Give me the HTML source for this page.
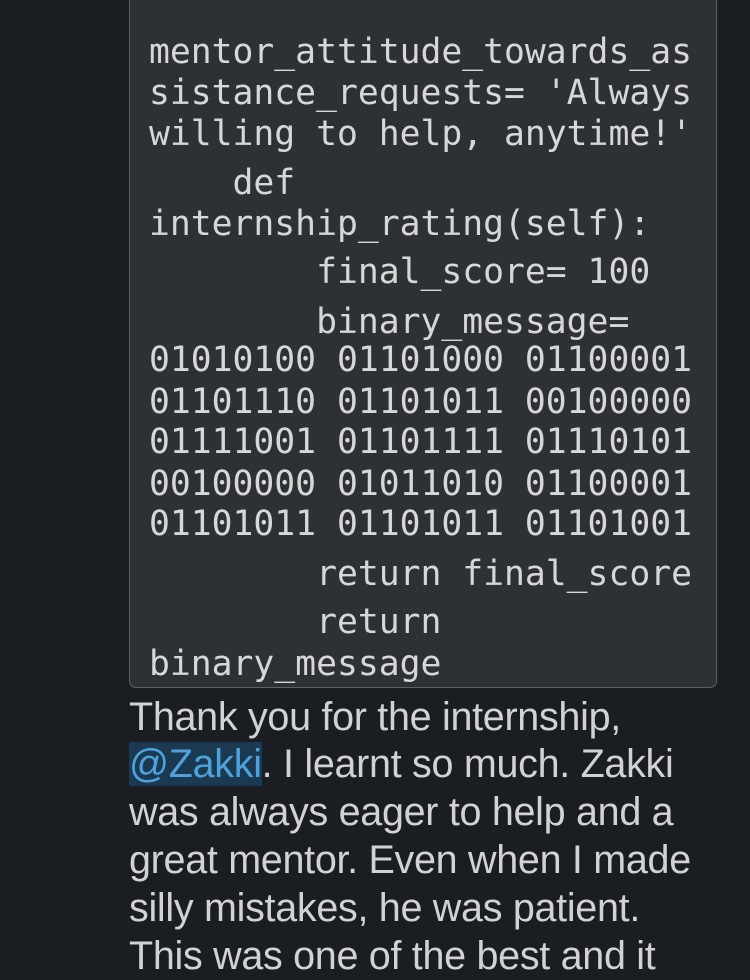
<!DOCTYPE html>
<html><head><meta charset="utf-8"><style>
html,body{margin:0;padding:0;}
body{width:750px;height:942px;background:#1a1d21;position:relative;overflow:hidden;}
.box{position:absolute;left:129px;top:-10px;width:588px;height:698px;background:#2e3134;border:1.5px solid #5e6164;border-radius:7px;box-sizing:border-box;}
.c{position:absolute;left:149px;font-family:"DejaVu Sans Mono","Liberation Mono",monospace;font-size:34.7px;line-height:40px;color:#d6d7d8;white-space:pre;}
.p{position:absolute;left:129px;font-family:"Liberation Sans",sans-serif;font-size:39.5px;line-height:48px;color:#d1d2d3;white-space:pre;letter-spacing:-0.3px;}
.m{background:#1b3a52;color:#4da2dc;}
</style></head><body>
<div class="box"></div>
<div class="c" style="top:32px">mentor_attitude_towards_as</div>
<div class="c" style="top:73px">sistance_requests= 'Always</div>
<div class="c" style="top:114px">willing to help, anytime!'</div>
<div class="c" style="top:163px">    def</div>
<div class="c" style="top:204px">internship_rating(self):</div>
<div class="c" style="top:252px">        final_score= 100</div>
<div class="c" style="top:302px">        binary_message=</div>
<div class="c" style="top:340px">01010100 01101000 01100001</div>
<div class="c" style="top:382px">01101110 01101011 00100000</div>
<div class="c" style="top:422px">01111001 01101111 01110101</div>
<div class="c" style="top:464px">00100000 01011010 01100001</div>
<div class="c" style="top:504px">01101011 01101011 01101001</div>
<div class="c" style="top:554px">        return final_score</div>
<div class="c" style="top:602px">        return</div>
<div class="c" style="top:644px">binary_message</div>
<div class="p" style="top:693px">Thank you for the internship,</div>
<div class="p" style="top:740px"><span class="m">@Zakki</span>. I learnt so much. Zakki</div>
<div class="p" style="top:788px">was always eager to help and a</div>
<div class="p" style="top:836px">great mentor. Even when I made</div>
<div class="p" style="top:884px">silly mistakes, he was patient.</div>
<div class="p" style="top:932px">This was one of the best and it</div>
</body></html>
